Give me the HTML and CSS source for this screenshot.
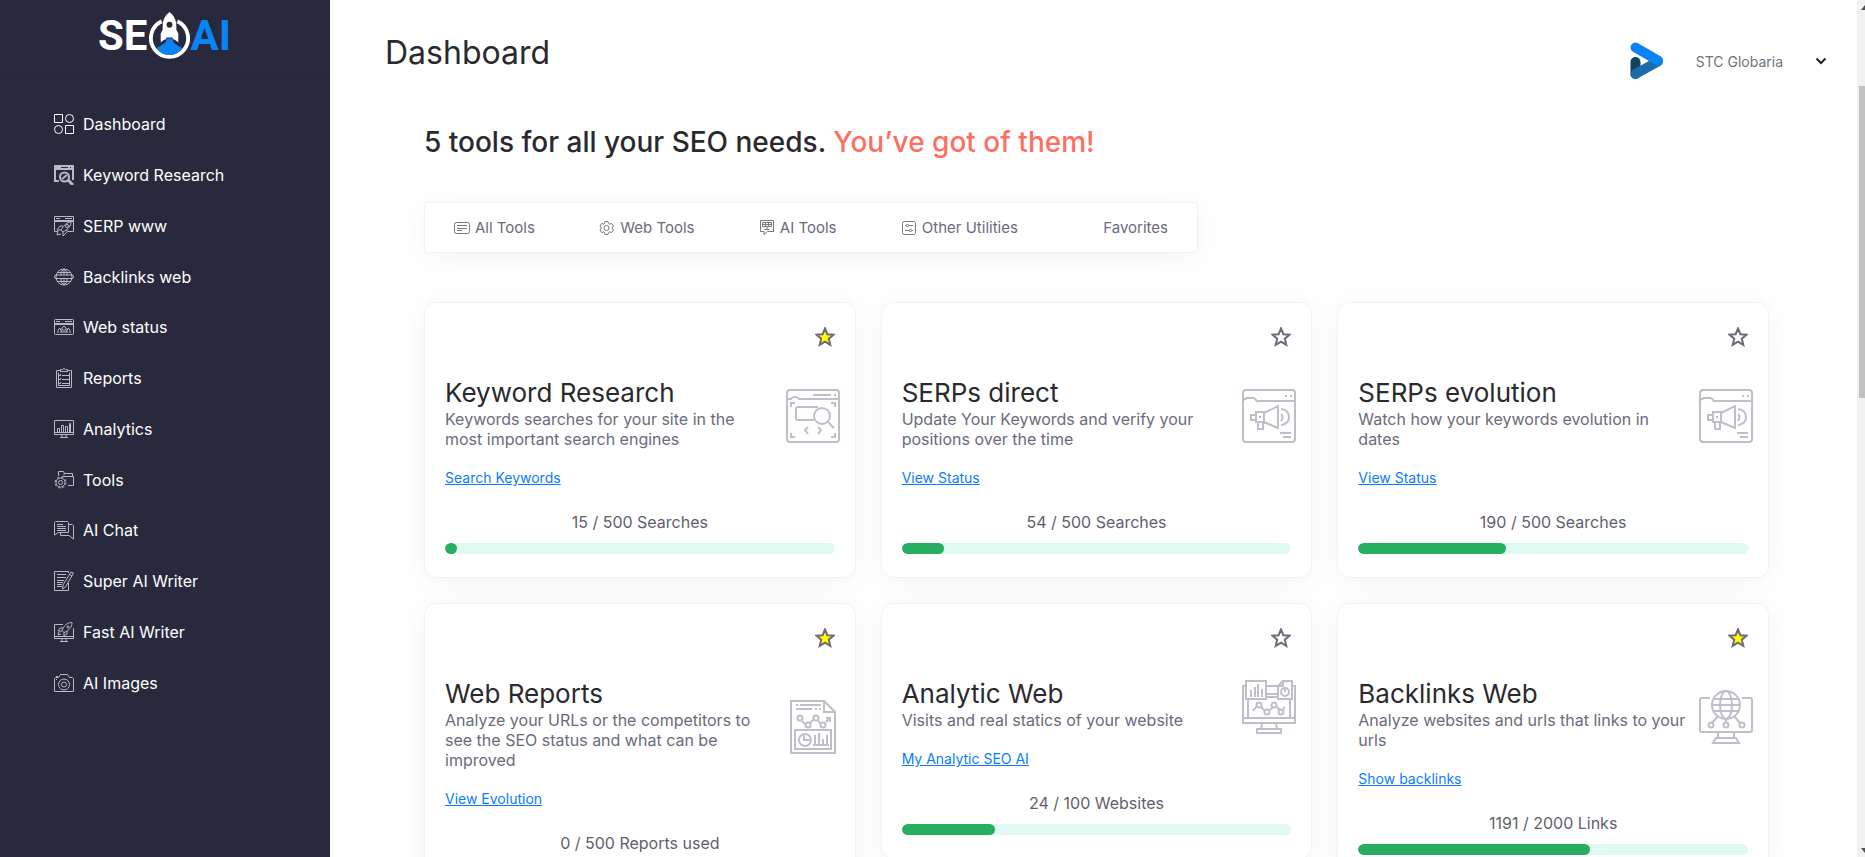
FILE: index.html
```html
<!DOCTYPE html>
<html lang="en">
<head>
  <meta charset="UTF-8" />
  <meta name="viewport" content="width=device-width, initial-scale=1.0" />
  <title>SEO AI - Dashboard</title>
  <link rel="stylesheet" href="styles.css">
</head>
<body>

<!-- Shared icons -->
<svg class="sprite" aria-hidden="true">
  <symbol id="star" viewBox="0 0 20 20">
    <path d="M10 1.5l2.4 5.7 6.1.5-4.7 4 1.5 6.1L10 14.6l-5.3 3.2 1.5-6.1-4.7-4 6.1-.5z"/>
  </symbol>
  <symbol id="megaphone" viewBox="0 0 54 54">
    <rect x="1" y="1" width="52" height="52" rx="3"/>
    <path d="M1 11l4-2h6q2 0 3 2t3 1h36M43 7h2M48 7h2M22 24l14-7v22l-14-6zM14 23h8v10h-8zM9 26h5v5H9zM16 33h5v7h-5zM17 28h2M39 25q3 3 0 7M39 20q8 1 8 8t-8 8M38 44h11M41 48h8"/>
  </symbol>
</svg>

<div class="page">
  <aside class="sidebar">
    <a class="logo" href="#" aria-label="SEO AI">
      <span class="logo-seo">SE</span>
      <svg class="logo-rocket" viewBox="0 0 44 48">
        <path d="M14 9.500A19 19 0 1 0 30 9.500" fill="none" stroke="#fff" stroke-width="4"/>
        <path d="M9 37c2-2 5-2 6-4 2-1 3-1 4-6h6c1 5 2 5 4 6 1 2 4 2 6 4-6 9-20 9-26 0z" fill="#0a84f5"/>
        <path d="M22 0c4 3 7 8 7 14v4l2 4v9l-4-3h-1l-1-2h-6l-1 2h-1l-4 3v-9l2-4v-4c0-6 3-11 7-14z" fill="#fff"/>
        <circle cx="22" cy="13" r="3" fill="#28293d"/>
      </svg>
      <span class="logo-ai">AI</span>
    </a>

    <ul class="side-nav">
      <li><a href="#">
        <svg class="bright" viewBox="0 0 20 20"><path d="M.5.5h8v8h-8zM11.500 11.500h8v8h-8z"/><circle cx="15.500" cy="4.500" r="4"/><circle cx="4.500" cy="15.500" r="4"/></svg>
        Dashboard</a></li>
      <li><a href="#">
        <svg viewBox="0 0 20 20"><path d="M5 16H1V1h18v14" stroke-width="2"/><path d="M1 3h18" stroke-width="4"/><path d="M7 2.500h7M16 2.500h1" stroke="#28293d"/><circle cx="10.500" cy="12" r="4.500" stroke-width="2"/><path d="M14 15l5 5" stroke-width="3"/><path d="M8 14l5-4" stroke-width="2"/></svg>
        Keyword Research</a></li>
      <li><a href="#">
        <svg viewBox="0 0 20 20"><path d="M4 15.500H.5V.5h19v15H14M1 4.500h18M1 5.500h18M2 2.500h4M11 2.500h7M17 6c-4 0-7 3-10 8l2 2c5-3 8-6 8-10zM9 10H6l-3 4h4M13 13v3l-4 4v-4M4 15l-1 4 4-1"/><circle cx="13" cy="10" r="1.500"/></svg>
        SERP www</a></li>
      <li><a href="#">
        <svg viewBox="0 0 20 20"><circle cx="10" cy="10" r="8"/><path d="M3 5.500h14M3 14.500h14M10 2v6M10 12v6M7 8c0-3 1-5 3-6 2 1 3 3 3 6M7 12c0 3 1 5 3 6 2-1 3-3 3-6"/><rect x=".5" y="8" width="19" height="3.500" rx="1.500"/></svg>
        Backlinks web</a></li>
      <li><a href="#">
        <svg viewBox="0 0 20 20"><rect x=".5" y="2.500" width="19" height="15" rx="1"/><path d="M1 6.500h18M1 7.500h18M2 4.500h4M11 4.500h7M4 16v-3l2-2 1 2v3M8 16v-5l2-2 2 2v5M13 16v-3l1-2 2 2v3M10 12v4"/></svg>
        Web status</a></li>
      <li><a href="#">
        <svg viewBox="0 0 20 20"><path d="M6 2.500H2.500v17h15v-17H14M4.500 4.500v13h11v-13M6.500 1.500h2q1.500-2 3 0h2v2h-7zM8 7.500h7M8 11.500h7M8 15.500h7M5 7l1 1 1-2M5 11l1 1 1-2M5 15l1 1 1-2"/></svg>
        Reports</a></li>
      <li><a href="#">
        <svg viewBox="0 0 20 20"><path d="M.5 1.500h19v14H.5zM1 13.500h18M8 16v2M12 16v2M6 18.500h8M3.500 13V9.500h2V13M7.500 13V6.500h2V13M11.500 13V7.500h2V13M15.500 13V4.500h1V13"/></svg>
        Analytics</a></li>
      <li><a href="#">
        <svg viewBox="0 0 20 20"><path d="M4.500 6V1.500h5l1 2h8v3M8.500 6.500h11v9H14M10 3.500v2"/><circle cx="6.500" cy="12.500" r="5.500" stroke-dasharray="2.200 2.100"/><circle cx="6.500" cy="12.500" r="4.500"/><circle cx="6.500" cy="12.500" r="2"/></svg>
        Tools</a></li>
      <li><a href="#">
        <svg viewBox="0 0 20 20"><path d="M.5 15V2.500l1-1h12l1 1v10H4.500zM15 4.500h3.500l1 1V19L15 15.500H6.500V13M3 4.500h6M3 6.500h9M3 8.500h9M3 10.500h9"/></svg>
        AI Chat</a></li>
      <li><a href="#">
        <svg viewBox="0 0 20 20"><path d="M14.500 2V.5H.5v19h14V12M3 3.500h9M3 6.500h9M3 9.500h7M3 11.500h6M3 13.500h5M3 15.500h5M17 1l2.500 1-8 14-3 2 .5-4zM15 3l3 2"/></svg>
        Super AI Writer</a></li>
      <li><a href="#">
        <svg viewBox="0 0 20 20"><path d="M9 2.500H.5v14h19V6M1 14.500h18M8 17v2M12 17v2M6 19.500h8M18 .5c-5 0-8 3-10 8l2 2c5-2 8-5 8-10zM9 6H6L4 9h4M13 9v3l-3 2v-4M5 10l-1 3 3-1"/><circle cx="14" cy="5" r="1"/></svg>
        Fast AI Writer</a></li>
      <li><a href="#">
        <svg viewBox="0 0 20 20"><path d="M.5 5.500l1-1h3l2-3h7l2 3h3l1 1v13H.5zM2 3.500h2M2 6.500h1"/><circle cx="10" cy="11.500" r="5.500"/><circle cx="10" cy="11.500" r="2.500"/></svg>
        AI Images</a></li>
    </ul>
  </aside>

  <main class="main">
    <header class="topbar">
      <h1>Dashboard</h1>
      <button class="user" type="button">
        <svg class="user-logo" viewBox="0 0 34 38">
          <path d="M5.500 20v12" stroke="#10435c"/>
          <path d="M5.500 32L28 19.500" stroke="#1b6ca8"/>
          <path d="M5.500 5.500L28 18.500" stroke="#0a84f5"/>
        </svg>
        <span>STC Globaria</span>
        <svg class="chevron" viewBox="0 0 12 8"><path d="M1.500 1.500L6 6l4.500-4.500"/></svg>
      </button>
    </header>

    <section class="content">
      <h2>5 tools for all your SEO needs. <span>You’ve got of them!</span></h2>

      <nav class="tabs">
        <a href="#"><svg viewBox="0 0 16 14"><rect x=".5" y="1.500" width="15" height="11" rx="2"/><path d="M3 4.500h10M3 7.500h10M3 9.500h5"/></svg>All Tools</a>
        <a href="#"><svg viewBox="0 0 16 14"><path d="M6 .5h3l.5 2 1 .5 2-.5 2 2.500-1.500 2 1.500 2-2 2.500-2-.5-1 .5-.5 2H6l-.5-2-1-.5-2 .5-1.500-2.500L2.500 7 1 5l1.500-2.500 2 .5 1-.5z"/><circle cx="7.500" cy="7" r="2.500"/></svg>Web Tools</a>
        <a href="#"><svg viewBox="0 0 16 14"><path d="M1.500-.5h13v11h-6L5 13.500v-3H1.500zM3.500 1.500h9v4h-9zM4 3.500h8M6.500 2v3M9.500 2v3M8 6v2.500M5.500 8.500h5"/></svg>AI Tools</a>
        <a href="#"><svg viewBox="0 0 16 14"><rect x="1.500" y=".5" width="13" height="13" rx="2"/><path d="M4 4.500h1M8 4.500h4M4 9.500h4M11 9.500h1"/><circle cx="6.500" cy="4.500" r="1.200"/><circle cx="9.500" cy="9.500" r="1.200"/></svg>Other Utilities</a>
        <a href="#"><svg viewBox="0 0 16 14"></svg>Favorites</a>
      </nav>

      <div class="cards">
        <article class="card">
          <button class="fav on" type="button" aria-label="Favorite"><svg><use href="#star"/></svg></button>
          <div class="card-head">
            <div class="card-text">
              <h3>Keyword Research</h3>
              <p>Keywords searches for your site in the most important search engines</p>
            </div>
            <svg class="card-icon" viewBox="0 0 54 54">
              <rect x="1" y="1" width="52" height="52" rx="3"/>
              <path d="M1 10h4q1-2 4-2t4 2h40M27 6h18M48 6h2M5 18v-4h4M45 14h4v4M5 44v4h4M49 44v4h-4M28 31H12q-2 0-2-2V20q0-2 2-2h20M42 33l6 6M22 38l-3 3 3 4M32 38l3 3-3 4"/>
              <circle cx="36" cy="27" r="8"/>
            </svg>
          </div>
          <a class="card-link" href="#">Search Keywords</a>
          <div class="count">15 / 500 Searches</div>
          <div class="bar"><div class="bar-fill" style="width: 3%"></div></div>
        </article>

        <article class="card">
          <button class="fav" type="button" aria-label="Favorite"><svg><use href="#star"/></svg></button>
          <div class="card-head">
            <div class="card-text">
              <h3>SERPs direct</h3>
              <p>Update Your Keywords and verify your positions over the time</p>
            </div>
            <svg class="card-icon"><use href="#megaphone"/></svg>
          </div>
          <a class="card-link" href="#">View Status</a>
          <div class="count">54 / 500 Searches</div>
          <div class="bar"><div class="bar-fill" style="width: 10.8%"></div></div>
        </article>

        <article class="card">
          <button class="fav" type="button" aria-label="Favorite"><svg><use href="#star"/></svg></button>
          <div class="card-head">
            <div class="card-text">
              <h3>SERPs evolution</h3>
              <p>Watch how your keywords evolution in dates</p>
            </div>
            <svg class="card-icon"><use href="#megaphone"/></svg>
          </div>
          <a class="card-link" href="#">View Status</a>
          <div class="count">190 / 500 Searches</div>
          <div class="bar"><div class="bar-fill" style="width: 38%"></div></div>
        </article>

        <article class="card">
          <button class="fav on" type="button" aria-label="Favorite"><svg><use href="#star"/></svg></button>
          <div class="card-head">
            <div class="card-text">
              <h3>Web Reports</h3>
              <p>Analyze your URLs or the competitors to see the SEO status and what can be improved</p>
            </div>
            <svg class="card-icon" viewBox="0 0 54 54">
              <path d="M5 1h33l11 11v41H5zM38 1v11h11M10 5h2M14 5h21M10 9h16M29 9h2M33 9h2M9 30h36v19H9zM16 21l3 3M24 23l4-4M32 21l3 3M40 22l4-4M40 18h4v4M18 34v6h6M29 35v10M33 33v12M37 39v6M41 35v10M27 45h16"/>
              <circle cx="14" cy="18" r="2.500"/><circle cx="22" cy="25" r="2.500"/><circle cx="30" cy="18" r="2.500"/><circle cx="37" cy="25" r="2.500"/>
              <circle cx="19" cy="40" r="6"/>
            </svg>
          </div>
          <a class="card-link" href="#">View Evolution</a>
          <div class="count">0 / 500 Reports used</div>
          <div class="bar"><div class="bar-fill" style="width: 0%"></div></div>
        </article>

        <article class="card">
          <button class="fav" type="button" aria-label="Favorite"><svg><use href="#star"/></svg></button>
          <div class="card-head">
            <div class="card-text">
              <h3>Analytic Web</h3>
              <p>Visits and real statics of your website</p>
            </div>
            <svg class="card-icon" viewBox="0 0 54 54">
              <path d="M4 6H1v37h52V6h-3M24 6h12M24 14h12M24 17h12M4 1h20v18H4zM9 10v7M13 7v10M16 4v13M20 9v8M41 1h9v18H36V6zM41 1v5h-5M6 20v17M48 20v17M1 38h52M20 44l-1 5M34 44l1 5M15 49h24v4H15zM11 31l4-5M19 27l4 4M28 30l3-3M35 27l3 3M41 29l2-2M43 12v-3"/>
              <circle cx="17" cy="25" r="2.500"/><circle cx="25" cy="32" r="2.500"/><circle cx="32" cy="25" r="2.500"/><circle cx="39" cy="32" r="2.500"/><circle cx="43" cy="12" r="4"/>
            </svg>
          </div>
          <a class="card-link" href="#">My Analytic SEO AI</a>
          <div class="count">24 / 100 Websites</div>
          <div class="bar"><div class="bar-fill" style="width: 24%"></div></div>
        </article>

        <article class="card">
          <button class="fav on" type="button" aria-label="Favorite"><svg><use href="#star"/></svg></button>
          <div class="card-head">
            <div class="card-text">
              <h3>Backlinks Web</h3>
              <p>Analyze websites and urls that links to your urls</p>
            </div>
            <svg class="card-icon" viewBox="0 0 54 54">
              <circle cx="27" cy="15" r="14"/><ellipse cx="27" cy="15" rx="6" ry="14"/>
              <path d="M15 9h24M13 15h28M15 21h24M11 8H3q-2 0-2 2v30q0 2 2 2h48q2 0 2-2V10q0-2-2-2h-8M19 43v5M35 43v5M17 48h20l3 5H14zM27 29v4M19 26l-6 7M35 26l6 7"/>
              <circle cx="12" cy="35" r="2.500"/><circle cx="27" cy="35" r="2.500"/><circle cx="43" cy="35" r="2.500"/>
            </svg>
          </div>
          <a class="card-link" href="#">Show backlinks</a>
          <div class="count">1191 / 2000 Links</div>
          <div class="bar"><div class="bar-fill" style="width: 59.55%"></div></div>
        </article>
      </div>
    </section>
  </main>

  <div class="scroll-track">
    <svg viewBox="0 0 8 12"><path d="M8 4v5H4z"/></svg>
    <div class="scroll-thumb"></div>
    <svg viewBox="0 0 8 12"><path d="M8 9V4H4z"/></svg>
  </div>
</div>

</body>
</html>
```
FILE: styles.css
```css
* {
  box-sizing: border-box;
}

body {
  margin: 0;
  font-family: Inter, sans-serif;
  color: #2a2a2e;
  background: #fff;
}

h1, h2, h3, p, ul {
  margin: 0;
  padding: 0;
}

button {
  padding: 0;
  border: 0;
  background: none;
  font-family: inherit;
  cursor: pointer;
}

svg {
  fill: none;
  flex-shrink: 0;
}

.sprite {
  display: none;
}

.page {
  display: flex;
  height: 100vh;
  overflow: hidden;
}

/* Sidebar */
.sidebar {
  width: 330px;
  flex-shrink: 0;
  background: #28293d;
}

.logo {
  display: flex;
  align-items: center;
  height: 77px;
  padding: 0 0 5px 98px;
  border-bottom: 1px solid #252639;
  font-family: Roboto, sans-serif;
  font-size: 42px;
  font-weight: bold;
  line-height: 48px;
  text-decoration: none;
}

.logo-seo {
  color: #fff;
}

.logo-rocket {
  width: 43px;
  height: 47px;
}

.logo-ai {
  color: #0a84f5;
}

.side-nav {
  display: flex;
  flex-direction: column;
  height: 609px;
  margin-top: 22px;
  padding-left: 54px;
  list-style: none;
}

.side-nav li {
  display: flex;
  align-items: center;
  flex: 1;
}

.side-nav a {
  display: flex;
  align-items: center;
  gap: 9px;
  color: #fff;
  font-size: 16px;
  line-height: 24px;
  text-decoration: none;
}

.side-nav svg {
  width: 20px;
  height: 20px;
  stroke: #b9b9c4;
}

.side-nav .bright {
  stroke: #fff;
}

/* Main area */
.main {
  flex: 1;
  min-width: 0;
}

.topbar {
  display: flex;
  align-items: center;
  justify-content: space-between;
  padding: 32px 30px 0 55px;
}

.topbar h1 {
  padding-bottom: 16px;
  font-size: 32px;
  font-weight: 400;
  line-height: 42px;
}

.user {
  display: flex;
  align-items: center;
  color: #6c757d;
  font-size: 14px;
}

.user-logo {
  width: 34px;
  height: 38px;
  margin-right: 32px;
  stroke-width: 10;
  stroke-linecap: round;
}

.chevron {
  width: 12px;
  height: 8px;
  margin-left: 32px;
  stroke: #212529;
  stroke-width: 2;
}

.content {
  padding: 34px 88px 40px 94px;
}

.content h2 {
  font-size: 28px;
  font-weight: 500;
  line-height: 36px;
}

.content h2 span {
  color: #ff6f61;
}

.tabs {
  display: flex;
  align-items: center;
  justify-content: space-between;
  width: 774px;
  height: 51px;
  margin: 42px 0 49px;
  padding: 0 29px;
  border: 1px solid #f0f0fa;
  border-radius: 4px;
  box-shadow: 0 4px 30px rgba(0, 0, 0, 0.05);
}

.tabs a {
  display: flex;
  align-items: center;
  gap: 5px;
  color: #6b6b7b;
  font-size: 15px;
  text-decoration: none;
}

.tabs svg {
  width: 16px;
  height: 14px;
  stroke: #77777d;
  overflow: visible;
}

/* Tool cards */
.cards {
  display: grid;
  grid-template-columns: repeat(3, 1fr);
  align-items: start;
  gap: 25px;
}

.card {
  display: flex;
  flex-direction: column;
  align-items: flex-start;
  padding: 24px 20px 23px;
  background: #fff;
  border: 1px solid #f2f2fa;
  border-radius: 12px;
  box-shadow: 0 4px 30px rgba(0, 0, 0, 0.05);
}

.fav {
  align-self: flex-end;
  height: 20px;
  margin-bottom: 30px;
}

.fav svg {
  display: block;
  width: 20px;
  height: 20px;
  stroke: #6b6b7b;
  stroke-width: 2;
}

.fav.on svg {
  fill: #ff0;
}

.card-head {
  display: flex;
  align-items: center;
  justify-content: space-between;
  align-self: stretch;
  margin-right: -5px;
}

.card-text {
  max-width: 328px;
  padding-bottom: 6px;
}

.card h3 {
  font-size: 26px;
  font-weight: 400;
  line-height: 32px;
}

.card p {
  color: #6b6b7b;
  font-size: 16px;
  line-height: 20px;
}

.card-icon {
  width: 54px;
  height: 54px;
  stroke: #bfbfcc;
  stroke-width: 2;
}

.card-link {
  margin: 13px 0 22px;
  color: #0a7cff;
  font-size: 14px;
  line-height: 20px;
}

.count {
  align-self: center;
  color: #5f5f6e;
  font-size: 16px;
  line-height: 24px;
}

.bar {
  align-self: stretch;
  height: 11px;
  margin-top: 9px;
  border-radius: 6px;
  background: #e0f9f2;
  overflow: hidden;
}

.bar-fill {
  height: 100%;
  border-radius: 6px;
  background: #27ae60;
}

/* Page scrollbar */
.scroll-track {
  display: flex;
  flex-direction: column;
  width: 8px;
  padding: 1px 0;
  background: #f1f1f1;
}

.scroll-track svg {
  width: 8px;
  height: 12px;
  fill: #505050;
}

.scroll-thumb {
  height: 312px;
  margin: 73px 0 auto 2px;
  background: #c1c1c1;
}
```
